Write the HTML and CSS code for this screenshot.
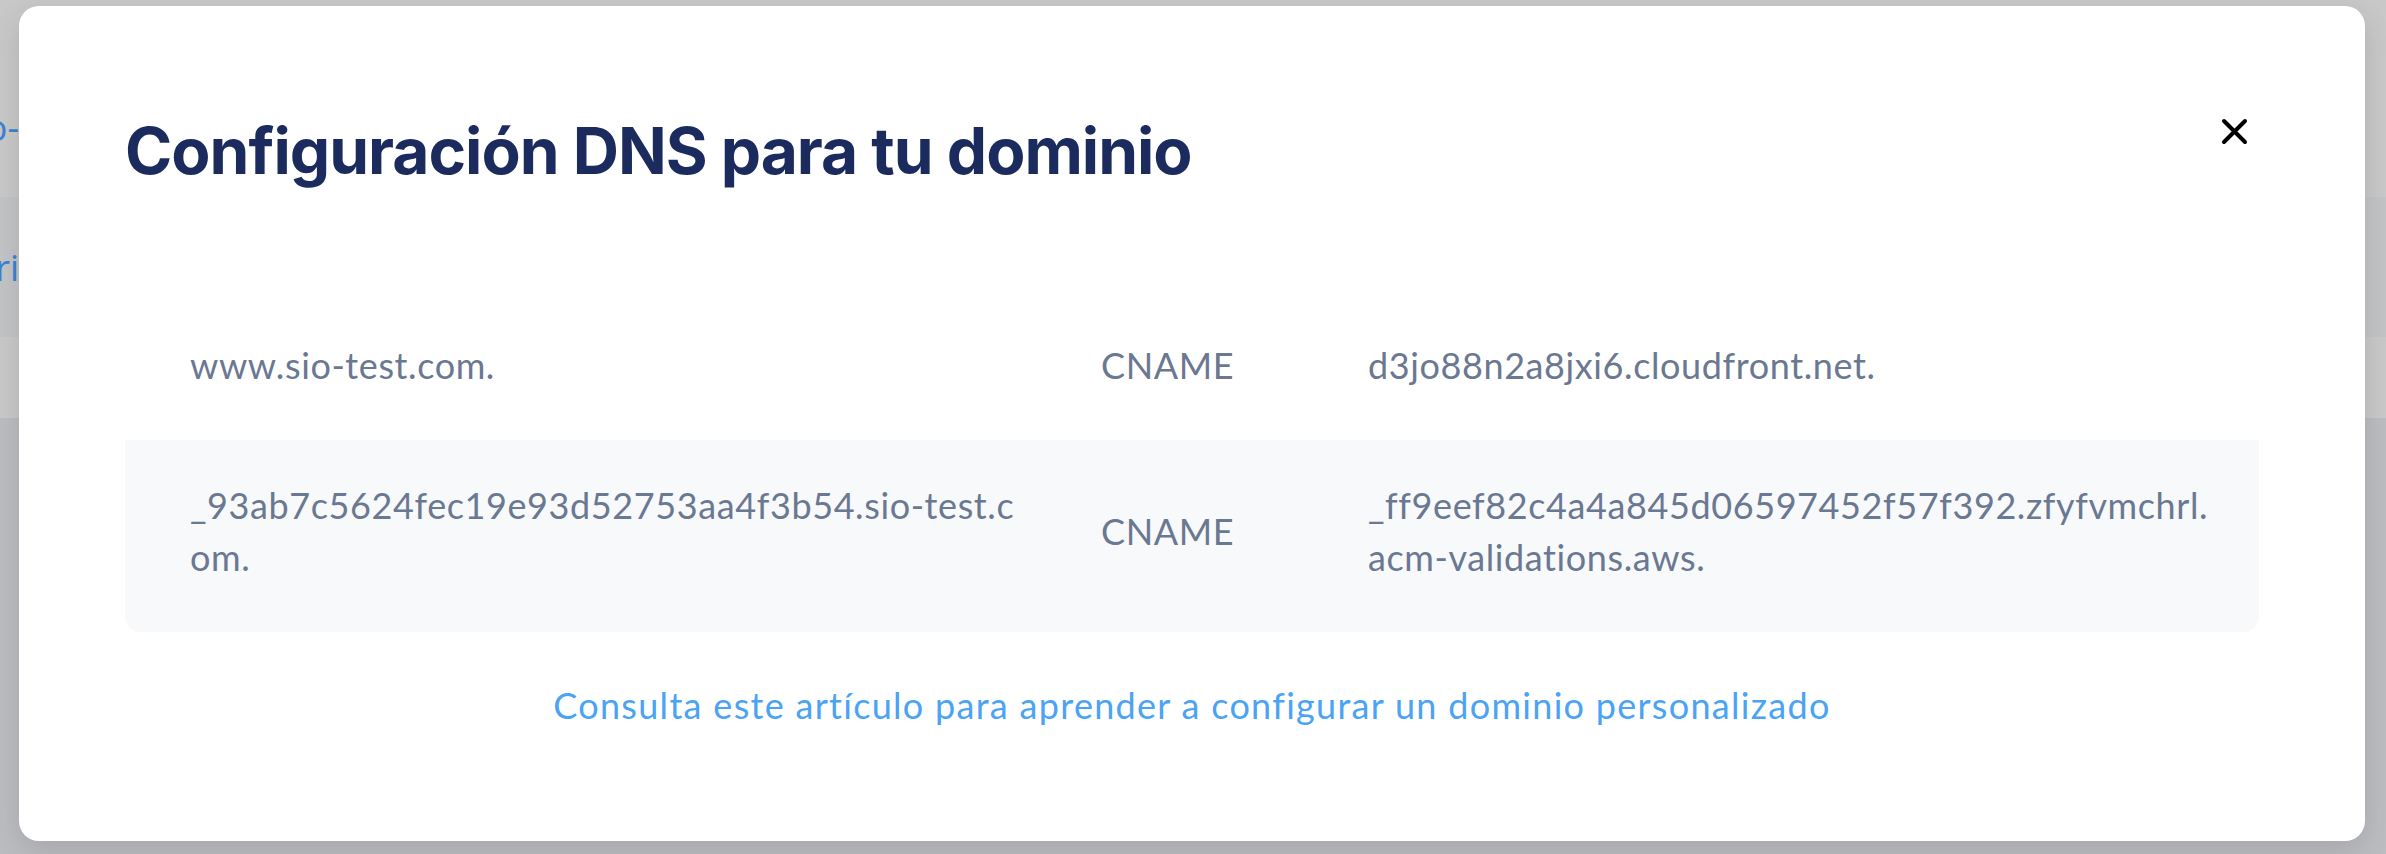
FILE: index.html
```html
<!DOCTYPE html>
<html lang="es">

<head>
  <meta charset="UTF-8" />
  <meta name="viewport" content="width=device-width, initial-scale=1.0" />
  <title>Configuración DNS</title>
  <link rel="stylesheet" href="styles.css">
</head>

<body>
  <!-- page behind the modal -->
  <div class="page">
    <div class="page-header"></div>
    <div class="page-row">
      <div class="page-label"><span>sio-</span></div>
    </div>
    <div class="page-row page-row-alt">
      <div class="page-label"><span>Descri</span></div>
    </div>
    <div class="page-row page-row-short"></div>
  </div>

  <div class="modal">
    <div class="modal-header">
      <h1 class="modal-title">Configuración DNS para tu dominio</h1>
    </div>
    <button class="modal-close" type="button" aria-label="Cerrar">
      <svg width="27" height="27" viewBox="0 0 27 27">
        <path d="M3 3L24 24M24 3L3 24" stroke="#000" stroke-width="4" stroke-linecap="round" fill="none" />
      </svg>
    </button>

    <div class="dns-table">
      <div class="dns-row">
        <div class="dns-cell dns-name">www.sio-test.com.</div>
        <div class="dns-cell dns-type">CNAME</div>
        <div class="dns-cell dns-value">d3jo88n2a8jxi6.cloudfront.net.</div>
      </div>
      <div class="dns-row">
        <div class="dns-cell dns-name">_93ab7c5624fec19e93d52753aa4f3b54.sio-test.com.</div>
        <div class="dns-cell dns-type">CNAME</div>
        <div class="dns-cell dns-value">_ff9eef82c4a4a845d06597452f57f392.zfyfvmchrl.acm-validations.aws.</div>
      </div>
    </div>

    <p class="modal-help">
      <a href="#">Consulta este artículo para aprender a configurar un dominio personalizado</a>
    </p>
  </div>
</body>

</html>
```
FILE: styles.css
```css
body {
  background: #bcbdc0;
  font-family: Lato, "Liberation Sans", sans-serif;
  height: 854px;
  margin: 0;
  overflow: hidden;
}

/* page behind */
.page {
  display: flex;
  flex-direction: column;
}

.page-header {
  background: #c8c8c8;
  height: 57px;
}

.page-row {
  align-items: center;
  background: #c9c9c9;
  display: flex;
  height: 140px;
}

.page-row-alt {
  background: #c3c4c5;
}

.page-row-short {
  height: 81px;
}

.page-label {
  color: #3b82d6;
  display: flex;
  font-family: "Open Sans", sans-serif;
  font-size: 36px;
  justify-content: flex-end;
  overflow: hidden;
  white-space: nowrap;
  width: 19px;
}

/* modal */
.modal {
  background: #fff;
  border-radius: 20px;
  bottom: 13px;
  box-shadow: 0 10px 30px rgba(0, 0, 0, .12);
  box-sizing: border-box;
  left: 19px;
  padding: 107px 106px 0;
  position: absolute;
  right: 21px;
  top: 6px;
}

.modal-header {
  display: flex;
}

.modal-title {
  color: #1b2b5e;
  font-family: Inter, sans-serif;
  font-size: 64px;
  font-weight: 700;
  letter-spacing: -1px;
  line-height: 1.2;
  margin: 0;
}

.modal-close {
  align-items: center;
  background: none;
  border: 0;
  cursor: pointer;
  display: flex;
  height: 41px;
  justify-content: center;
  padding: 0;
  position: absolute;
  right: 110px;
  top: 105px;
  width: 41px;
}

.dns-table {
  border-radius: 16px;
  color: #6a7891;
  font-size: 36px;
  letter-spacing: .6px;
  line-height: 52px;
  margin-top: 110px;
  overflow: hidden;
}

.dns-row {
  align-items: center;
  display: grid;
  grid-template-columns: 976px 267px 1fr;
}

.dns-row:nth-child(even) {
  background: #f8f9fb;
}

.dns-cell {
  padding: 39px 0 49px;
}

.dns-name {
  padding-left: 65px;
  padding-right: 80px;
  word-break: break-all;
}

.dns-value {
  padding-right: 38px;
  word-break: break-all;
}

.modal-help {
  font-size: 36px;
  letter-spacing: 1.3px;
  line-height: 54px;
  margin: 46px 0 0;
  text-align: center;
}

.modal-help a {
  color: #4aa3f5;
  text-decoration: none;
}
```
